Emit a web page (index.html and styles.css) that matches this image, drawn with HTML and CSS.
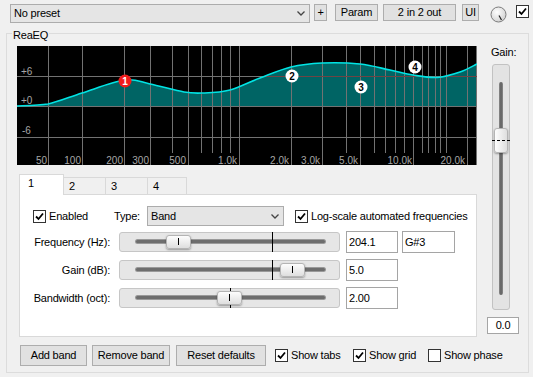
FILE: index.html
```html
<!DOCTYPE html>
<html lang="en">
<head>
    <meta charset="UTF-8">
    <title>ReaEQ</title>
    <link rel="stylesheet" href="styles.css">
</head>
<body>
    <div class="toolbar">
        <div class="dropdown preset">
            <span>No preset</span>
            <svg class="chev" viewBox="0 0 8 5"><path d="M0.5 0.5 4 4 7.5 0.5"/></svg>
        </div>
        <button class="btn btn-plus">+</button>
        <button class="btn btn-param">Param</button>
        <button class="btn btn-io">2 in 2 out</button>
        <button class="btn btn-ui">UI</button>
        <svg class="knob" viewBox="0 0 17 17">
            <defs>
                <radialGradient id="knob-face" cx="40%" cy="35%" r="70%">
                    <stop offset="0" stop-color="#ffffff"/>
                    <stop offset="1" stop-color="#d0d0d0"/>
                </radialGradient>
            </defs>
            <circle cx="8.5" cy="8.5" r="7.5" fill="url(#knob-face)" stroke="#7d7d7d"/>
            <path d="M9 9.5 L11.5 14" stroke="#222" stroke-width="1.2"/>
        </svg>
        <span class="check top-check"><svg class="tick" viewBox="0 0 11 11"><path d="M2 5.5 4.5 8 9 2.5"/></svg></span>
    </div>

    <fieldset class="group">
        <legend>ReaEQ</legend>
        <div class="group-body">
            <div class="main">
                <svg class="graph" viewBox="0 0 460 119">
                    <defs>
                        <clipPath id="fill-area">
                            <path d="M0,60 C5.2,59.7 20.2,59.6 31,58 C41.8,55.8 52.3,51 65,47 C77.7,43 96,35.5 108,34 C119,32.5 123,36 133,38 C143,40 158.2,44.5 167,46 C175.8,47.5 178.3,47.3 186,47 C193.7,46.7 203.5,46.5 213,44 C222.5,41.5 232.8,35.8 243,32 C253.2,28.2 263.7,23.5 274,21 C284.3,18.5 293.5,17.5 305,17 C316.5,16.5 331.7,16.8 343,18 C354.3,19.2 364.2,22.2 373,24 C381.8,25.8 388.2,27.75 396,29 C403.8,30.25 412.2,32 420,31.5 C427.8,31 436.3,28.25 443,26 C449.7,23.75 457.2,19.3 460,18 L460,60 L0,60 Z"/>
                        </clipPath>
                    </defs>
                    <rect width="460" height="119" fill="#000"/>
                    <path class="curve-fill" d="M0,60 C5.2,59.7 20.2,59.6 31,58 C41.8,55.8 52.3,51 65,47 C77.7,43 96,35.5 108,34 C119,32.5 123,36 133,38 C143,40 158.2,44.5 167,46 C175.8,47.5 178.3,47.3 186,47 C193.7,46.7 203.5,46.5 213,44 C222.5,41.5 232.8,35.8 243,32 C253.2,28.2 263.7,23.5 274,21 C284.3,18.5 293.5,17.5 305,17 C316.5,16.5 331.7,16.8 343,18 C354.3,19.2 364.2,22.2 373,24 C381.8,25.8 388.2,27.75 396,29 C403.8,30.25 412.2,32 420,31.5 C427.8,31 436.3,28.25 443,26 C449.7,23.75 457.2,19.3 460,18 L460,60 L0,60 Z"/>

                    <g class="grid">
                        <path d="M0 30.5H460M0 60.5H460M0 91.5H460"/>
                        <path d="M31.5 0V119M65.5 0V119M107.5 0V119M133.5 0V119M171.5 0V119M222.5 0V119M274.5 0V119M305.5 0V119M343.5 0V119M396.5 0V119M450.5 0V119M459.5 0V119"/>
                        <path d="M155.5 0V107M184.5 0V107M195.5 0V107M204.5 0V107M213.5 0V107M329.5 0V107M357.5 0V107M368.5 0V107M378.5 0V107M387.5 0V107M405.5 0V107M411.5 0V107M418.5 0V107M423.5 0V107M429.5 0V107"/>
                    </g>
                    <g clip-path="url(#fill-area)">
                        <path class="grid-warm" d="M0 30.5H460"/>
                    </g>

                    <path class="curve" d="M0,60 C5.2,59.7 20.2,59.6 31,58 C41.8,55.8 52.3,51 65,47 C77.7,43 96,35.5 108,34 C119,32.5 123,36 133,38 C143,40 158.2,44.5 167,46 C175.8,47.5 178.3,47.3 186,47 C193.7,46.7 203.5,46.5 213,44 C222.5,41.5 232.8,35.8 243,32 C253.2,28.2 263.7,23.5 274,21 C284.3,18.5 293.5,17.5 305,17 C316.5,16.5 331.7,16.8 343,18 C354.3,19.2 364.2,22.2 373,24 C381.8,25.8 388.2,27.75 396,29 C403.8,30.25 412.2,32 420,31.5 C427.8,31 436.3,28.25 443,26 C449.7,23.75 457.2,19.3 460,18"/>

                    <g class="axis">
                        <text x="4" y="29">+6</text>
                        <text x="4" y="58">+0</text>
                        <text x="5" y="88">-6</text>
                    </g>
                    <g class="axis freq">
                        <text x="30" y="117.5">50</text>
                        <text x="64" y="117.5">100</text>
                        <text x="106" y="117.5">200</text>
                        <text x="132" y="117.5">300</text>
                        <text x="169" y="117.5">500</text>
                        <text x="220" y="117.5">1.0k</text>
                        <text x="272" y="117.5">2.0k</text>
                        <text x="303" y="117.5">3.0k</text>
                        <text x="341" y="117.5">5.0k</text>
                        <text x="395" y="117.5">10.0k</text>
                        <text x="448" y="117.5">20.0k</text>
                    </g>

                    <g class="band selected">
                        <circle cx="108" cy="35" r="6.5"/>
                        <text x="108" y="38.5">1</text>
                    </g>
                    <g class="band">
                        <circle cx="275" cy="30" r="6.5"/>
                        <text x="275" y="33.5">2</text>
                    </g>
                    <g class="band">
                        <circle cx="344" cy="41" r="6.5"/>
                        <text x="344" y="44.5">3</text>
                    </g>
                    <g class="band">
                        <circle cx="398" cy="21" r="6.5"/>
                        <text x="398" y="24.5">4</text>
                    </g>
                </svg>

                <div class="tabs">
                    <div class="tab active">1</div>
                    <div class="tab tab-2">2</div>
                    <div class="tab tab-3">3</div>
                    <div class="tab tab-4">4</div>
                </div>

                <div class="panel">
                    <div class="band-head">
                        <label class="opt opt-enabled">
                            <span class="check"><svg class="tick" viewBox="0 0 11 11"><path d="M2 5.5 4.5 8 9 2.5"/></svg></span>
                            <span>Enabled</span>
                        </label>
                        <span class="type-label">Type:</span>
                        <div class="dropdown type">
                            <span>Band</span>
                            <svg class="chev" viewBox="0 0 8 5"><path d="M0.5 0.5 4 4 7.5 0.5"/></svg>
                        </div>
                        <label class="opt opt-log">
                            <span class="check"><svg class="tick" viewBox="0 0 11 11"><path d="M2 5.5 4.5 8 9 2.5"/></svg></span>
                            <span>Log-scale automated frequencies</span>
                        </label>
                    </div>

                    <div class="param">
                        <span class="param-label">Frequency (Hz):</span>
                        <div class="slider">
                            <div class="groove"></div>
                            <div class="mark" style="left: 152px;"></div>
                            <div class="thumb" style="left: 46px;"></div>
                        </div>
                        <div class="field">204.1</div>
                        <div class="field field-note">G#3</div>
                    </div>
                    <div class="param">
                        <span class="param-label">Gain (dB):</span>
                        <div class="slider">
                            <div class="groove"></div>
                            <div class="mark" style="left: 152px;"></div>
                            <div class="thumb" style="left: 160px;"></div>
                        </div>
                        <div class="field">5.0</div>
                    </div>
                    <div class="param">
                        <span class="param-label">Bandwidth (oct):</span>
                        <div class="slider">
                            <div class="groove"></div>
                            <div class="mark" style="left: 110px;"></div>
                            <div class="thumb" style="left: 97px;"></div>
                        </div>
                        <div class="field">2.00</div>
                    </div>
                </div>

                <div class="actions">
                    <button class="btn btn-add">Add band</button>
                    <button class="btn btn-remove">Remove band</button>
                    <button class="btn btn-reset">Reset defaults</button>
                    <label class="opt opt-tabs">
                        <span class="check"><svg class="tick" viewBox="0 0 11 11"><path d="M2 5.5 4.5 8 9 2.5"/></svg></span>
                        <span>Show tabs</span>
                    </label>
                    <label class="opt opt-grid">
                        <span class="check"><svg class="tick" viewBox="0 0 11 11"><path d="M2 5.5 4.5 8 9 2.5"/></svg></span>
                        <span>Show grid</span>
                    </label>
                    <label class="opt opt-phase">
                        <span class="check"></span>
                        <span>Show phase</span>
                    </label>
                </div>
            </div>

            <div class="gain-col">
                <div class="gain-label">Gain:</div>
                <div class="vslider">
                    <div class="vgroove"></div>
                    <div class="vthumb" style="top: 63px;"></div>
                    <div class="vline" style="top: 75px;"></div>
                </div>
                <div class="gain-value">0.0</div>
            </div>
        </div>
    </fieldset>
</body>
</html>
```

FILE: styles.css
```css
body {
    margin: 0;
    width: 533px;
    height: 377px;
    overflow: hidden;
    background: #f0f0f0;
    font-family: "Liberation Sans", Arial, sans-serif;
    font-size: 11px;
    line-height: 13px;
    letter-spacing: -0.2px;
    white-space: nowrap;
    color: #000;
}

/* top bar */

.toolbar {
    display: flex;
    align-items: flex-start;
    height: 19px;
    padding: 4px 0 0 10px;
}

.dropdown {
    box-sizing: border-box;
    display: flex;
    align-items: center;
    justify-content: space-between;
    height: 19px;
    padding: 0 4px 0 3px;
    background: #e5e5e5;
    border: 1px solid #acacac;
}

.preset {
    width: 300px;
}

.chev {
    width: 8px;
    height: 5px;
    fill: none;
    stroke: #444;
    stroke-width: 1.3;
}

.btn {
    box-sizing: border-box;
    height: 17px;
    margin: 0;
    padding: 0;
    border: 1px solid #adadad;
    background: #e1e1e1;
    font: inherit;
    line-height: 15px;
    letter-spacing: -0.2px;
    color: #000;
    text-align: center;
    white-space: nowrap;
}

.btn-plus {
    width: 13px;
    margin-left: 4px;
}

.btn-param {
    width: 43px;
    margin-left: 8px;
}

.btn-io {
    width: 73px;
    margin-left: 5px;
}

.btn-ui {
    width: 17px;
    margin-left: 6px;
}

.knob {
    width: 17px;
    height: 17px;
    margin: 2px 0 0 11px;
}

.check {
    box-sizing: border-box;
    display: inline-flex;
    align-items: center;
    justify-content: center;
    flex: none;
    width: 13px;
    height: 13px;
    border: 1px solid #333;
    background: #fff;
}

.tick {
    width: 11px;
    height: 11px;
    fill: none;
    stroke: #000;
    stroke-width: 1.8;
}

.top-check {
    margin: 1px 0 0 9px;
}

/* group box */

.group {
    min-width: 0;
    margin: 1px 4px 0 6px;
    padding: 4px 0 6px 0;
    border: 1px solid #dcdcdc;
}

.group legend {
    margin-left: 5px;
    padding: 5px 1px 0;
    line-height: 13px;
}

.group-body {
    display: flex;
    padding-left: 10px;
}

.main {
    flex: none;
    width: 460px;
}

/* graph */

.graph {
    display: block;
    width: 460px;
    height: 119px;
    letter-spacing: 0;
}

.curve-fill {
    fill: #006464;
}

.grid path {
    fill: none;
    stroke: #727272;
    stroke-width: 1;
}

.grid-warm {
    stroke: #6e4444;
    stroke-width: 1;
}

.curve {
    fill: none;
    stroke: #00e4e4;
    stroke-width: 1.6;
}

.axis text {
    font-family: "Liberation Sans", Arial, sans-serif;
    font-size: 10px;
    fill: #a6a6a6;
}

.freq text {
    text-anchor: end;
}

.band circle {
    fill: #fff;
}

.band text {
    font-family: "Liberation Sans", Arial, sans-serif;
    font-size: 10px;
    font-weight: bold;
    text-anchor: middle;
    fill: #000;
}

.band.selected circle {
    fill: #f01c1c;
}

.band.selected text {
    fill: #fff;
}

/* tabs */

.tabs {
    position: relative;
    z-index: 1;
    display: flex;
    align-items: flex-end;
    height: 20px;
    margin: 9px 0 0 2px;
}

.tab {
    box-sizing: border-box;
    height: 17px;
    margin-left: -1px;
    padding: 2px 0 0 5px;
    border: 1px solid #d9d9d9;
    border-bottom: 0;
    background: #f0f0f0;
}

.tab.active {
    position: relative;
    z-index: 1;
    width: 45px;
    height: 21px;
    margin: 0 0 -1px 0;
    padding-left: 8px;
    background: #fff;
}

.tab-2,
.tab-3 {
    width: 43px;
}

.tab-4 {
    width: 40px;
}

.panel {
    box-sizing: border-box;
    width: 458px;
    height: 143px;
    margin-left: 2px;
    padding: 11px 0 0 13px;
    border: 1px solid #d9d9d9;
    background: #fff;
}

.band-head {
    display: flex;
    align-items: center;
    height: 20px;
}

.opt {
    display: flex;
    flex: none;
    align-items: center;
    gap: 3px;
}

.opt-enabled {
    width: 81px;
}

.type-label {
    flex: none;
    width: 33px;
}

.dropdown.type {
    flex: none;
    width: 137px;
    height: 20px;
}

.opt-log {
    margin-left: 11px;
}

/* parameter rows */

.param {
    display: flex;
    align-items: center;
    height: 22px;
    margin-top: 6px;
}

.band-head + .param {
    margin-top: 5px;
}

.param-label {
    flex: none;
    width: 77px;
    text-align: right;
}

.slider {
    position: relative;
    box-sizing: border-box;
    flex: none;
    width: 221px;
    height: 20px;
    margin-left: 9px;
    border: 1px solid #c6c6c6;
    border-radius: 3px;
    background: #e6e6e6;
}

.groove {
    height: 3px;
    margin: 7px 14px 0 16px;
    border-radius: 2px;
    background: #6e6e6e;
    box-shadow: 0 0 0 1px #9a9a9a;
}

.mark {
    position: absolute;
    top: -1px;
    bottom: -1px;
    width: 1px;
    background: #000;
}

.thumb {
    position: absolute;
    top: 2px;
    box-sizing: border-box;
    width: 25px;
    height: 14px;
    border: 1px solid #b4b4b4;
    border-radius: 3px;
    background: linear-gradient(#fdfdfd, #dedede);
    box-shadow: 0 1px 2px rgba(0, 0, 0, 0.35);
}

.thumb::after {
    content: "";
    position: absolute;
    left: 11px;
    top: 2px;
    width: 1px;
    height: 7px;
    background: #000;
}

.field {
    box-sizing: border-box;
    flex: none;
    width: 52px;
    height: 22px;
    margin-left: 6px;
    padding: 0 2px;
    border: 1px solid #a5a5a5;
    background: #fff;
    line-height: 20px;
}

.field-note {
    width: 53px;
    margin-left: 4px;
}

/* bottom row */

.actions {
    display: flex;
    align-items: center;
    height: 21px;
    margin: 8px 0 0 3px;
}

.actions .btn {
    flex: none;
    height: 21px;
    line-height: 19px;
}

.btn-add {
    width: 67px;
}

.btn-remove {
    width: 78px;
    margin-left: 5px;
}

.btn-reset {
    width: 90px;
    margin-left: 6px;
}

.opt-tabs {
    width: 78px;
    margin-left: 9px;
}

.opt-grid {
    width: 75px;
}

/* gain column */

.gain-col {
    display: flex;
    flex: none;
    flex-direction: column;
    width: 32px;
    margin-left: 10px;
}

.gain-label {
    padding-left: 4px;
}

.vslider {
    position: relative;
    box-sizing: border-box;
    width: 18px;
    height: 246px;
    margin: 5px 0 0 5px;
    border: 1px solid #c2c2c2;
    border-radius: 3px;
    background: #e3e3e3;
}

.vgroove {
    width: 4px;
    height: 213px;
    margin: 17px 0 0 6px;
    border-radius: 2px;
    background: linear-gradient(90deg, #8c8c8c, #5e5e5e 50%, #8c8c8c);
}

.vthumb {
    position: absolute;
    left: 1px;
    box-sizing: border-box;
    width: 14px;
    height: 25px;
    border: 1px solid #b4b4b4;
    border-radius: 3px;
    background: linear-gradient(90deg, #fdfdfd, #dedede);
    box-shadow: 0 1px 2px rgba(0, 0, 0, 0.35);
}

.vline {
    position: absolute;
    left: -1px;
    right: -1px;
    border-top: 1px dashed #000;
}

.gain-value {
    box-sizing: border-box;
    height: 17px;
    margin-top: 7px;
    border: 1px solid #a5a5a5;
    background: #fff;
    line-height: 15px;
    text-align: center;
}
```
